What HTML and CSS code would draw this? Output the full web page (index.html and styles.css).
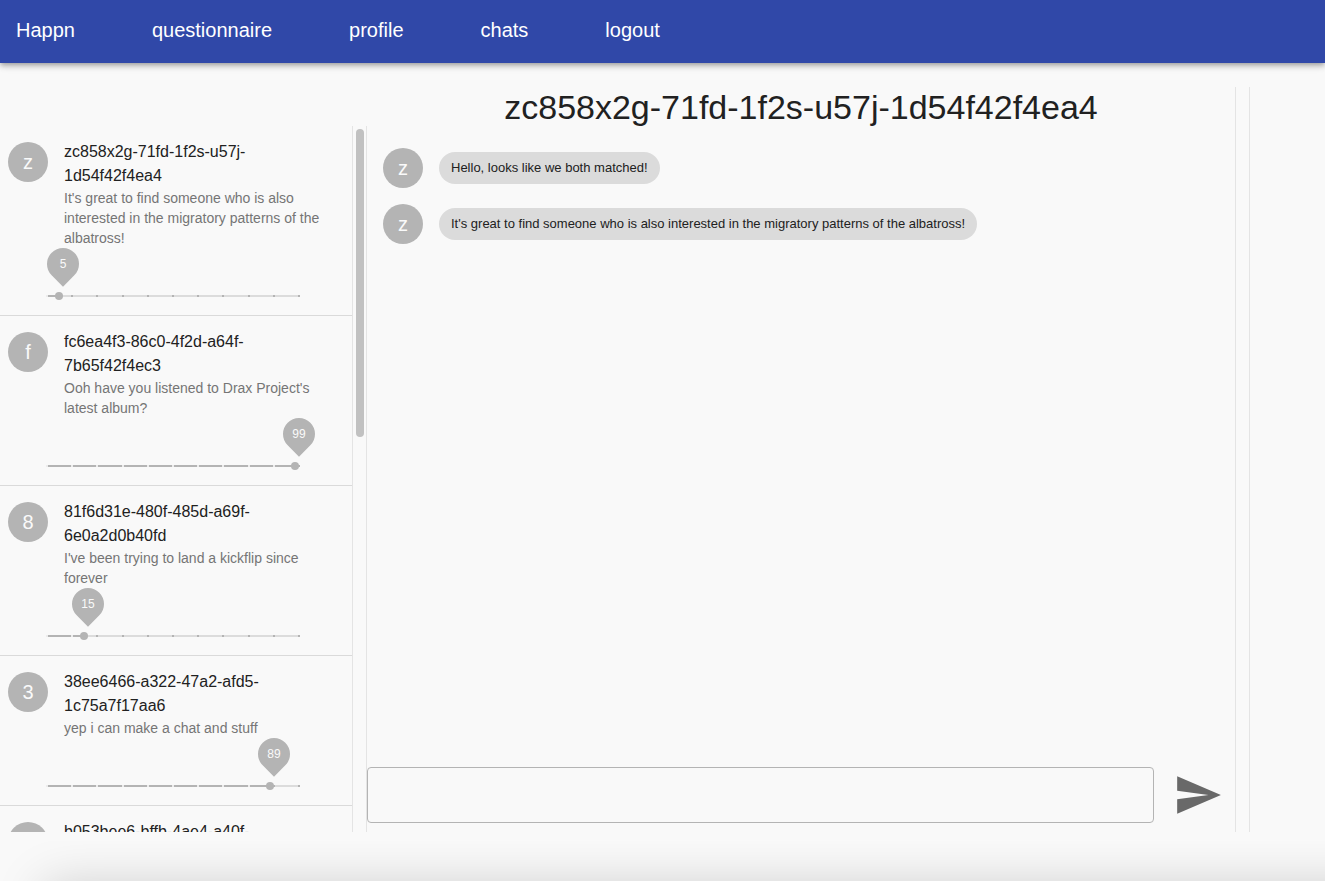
FILE: index.html
```html
<!DOCTYPE html>
<html lang="en">
<head>
<meta charset="utf-8">
<title>Happn</title>
<link rel="stylesheet" href="styles.css">
</head>
<body>
<nav class="navbar">
  <a href="#">Happn</a>
  <a href="#">questionnaire</a>
  <a href="#">profile</a>
  <a href="#">chats</a>
  <a href="#">logout</a>
</nav>
<main class="layout">
  <aside class="sidebar">
    <ul class="matches">
      <li class="match">
        <div class="match-head">
          <span class="avatar">z</span>
          <div class="match-text">
            <p class="match-name">zc858x2g-71fd-1f2s-u57j-1d54f42f4ea4</p>
            <p class="match-last">It's great to find someone who is also interested in the migratory patterns of the albatross!</p>
          </div>
        </div>
        <div class="slider" style="--value: 5%">
          <div class="slider-fill"></div>
          <input type="range" value="5" disabled aria-label="Match score">
          <output class="bubble"><span>5</span></output>
        </div>
      </li>
      <li class="match">
        <div class="match-head">
          <span class="avatar">f</span>
          <div class="match-text">
            <p class="match-name">fc6ea4f3-86c0-4f2d-a64f-7b65f42f4ec3</p>
            <p class="match-last">Ooh have you listened to Drax Project's latest album?</p>
          </div>
        </div>
        <div class="slider" style="--value: 99%">
          <div class="slider-fill"></div>
          <input type="range" value="99" disabled aria-label="Match score">
          <output class="bubble"><span>99</span></output>
        </div>
      </li>
      <li class="match">
        <div class="match-head">
          <span class="avatar">8</span>
          <div class="match-text">
            <p class="match-name">81f6d31e-480f-485d-a69f-6e0a2d0b40fd</p>
            <p class="match-last">I've been trying to land a kickflip since forever</p>
          </div>
        </div>
        <div class="slider" style="--value: 15%">
          <div class="slider-fill"></div>
          <input type="range" value="15" disabled aria-label="Match score">
          <output class="bubble"><span>15</span></output>
        </div>
      </li>
      <li class="match">
        <div class="match-head">
          <span class="avatar">3</span>
          <div class="match-text">
            <p class="match-name">38ee6466-a322-47a2-afd5-1c75a7f17aa6</p>
            <p class="match-last">yep i can make a chat and stuff</p>
          </div>
        </div>
        <div class="slider" style="--value: 89%">
          <div class="slider-fill"></div>
          <input type="range" value="89" disabled aria-label="Match score">
          <output class="bubble"><span>89</span></output>
        </div>
      </li>
      <li class="match">
        <div class="match-head">
          <span class="avatar"></span>
          <div class="match-text">
            <p class="match-name">b053bee6-bffb-4ae4-a40f-</p>
          </div>
        </div>
      </li>
    </ul>
    <div class="scrollbar"><div class="scrollbar-thumb"></div></div>
  </aside>
  <section class="chat">
    <div class="chat-body">
      <h1 class="chat-title">zc858x2g-71fd-1f2s-u57j-1d54f42f4ea4</h1>
      <ul class="messages">
        <li class="message"><span class="avatar">z</span><span class="chip">Hello, looks like we both matched!</span></li>
        <li class="message"><span class="avatar">z</span><span class="chip">It's great to find someone who is also interested in the migratory patterns of the albatross!</span></li>
      </ul>
      <form class="composer">
        <input type="text" class="composer-input" aria-label="Message">
        <button type="button" class="send" aria-label="Send">
          <svg viewBox="0 0 24 24" width="50" height="50" aria-hidden="true"><path fill="currentColor" d="M2.01 21L23 12 2.01 3 2 10l15 2-15 2z"/></svg>
        </button>
      </form>
    </div>
    <div class="scrollbar"></div>
  </section>
</main>
<div class="bottom-shade"></div>
</body>
</html>
```
FILE: styles.css
```css
* {
  box-sizing: border-box;
}

body {
  margin: 0;
  height: 100vh;
  overflow: hidden;
  position: relative;
  background: #f9f9f9;
  color: #212121;
  font-family: "Liberation Sans", Helvetica, Arial, sans-serif;
}

p, h1, ul {
  margin: 0;
  padding: 0;
}

ul {
  list-style: none;
}

.navbar {
  display: flex;
  align-items: center;
  gap: 77px;
  padding: 14px 16px 17px;
  background: #3048a8;
  box-shadow: 0 2px 4px -1px rgba(0, 0, 0, 0.2), 0 4px 5px rgba(0, 0, 0, 0.14), 0 1px 10px rgba(0, 0, 0, 0.12);
  font-size: 20px;
  line-height: 32px;
}

.navbar a {
  color: #fff;
  text-decoration: none;
}

.layout {
  display: grid;
  grid-template-columns: 367px 1fr;
  height: calc(80vh + 40px);
  margin: 24px 75px 0 0;
}

.sidebar {
  display: flex;
  min-height: 0;
  margin-top: 39px;
}

.matches {
  flex: 1;
  overflow: hidden;
}

.scrollbar {
  flex: none;
  width: 15px;
  padding: 3px;
  border: solid #e4e4e4;
  border-width: 0 1px;
}

.scrollbar-thumb {
  height: 44%;
  width: 8px;
  border-radius: 4px;
  background: #c1c1c1;
}

.match {
  border-bottom: 1px solid #dadada;
}

.match-head {
  display: flex;
  gap: 16px;
  padding: 14px 16px 14px 8px;
}

.avatar {
  flex: none;
  width: 40px;
  height: 40px;
  border-radius: 50%;
  background: #b4b4b4;
  color: #fafafa;
  font-size: 20px;
  line-height: 40px;
  text-align: center;
}

.match .avatar {
  margin-top: 2px;
}

.match-text {
  min-width: 0;
}

.match-name {
  font-size: 16px;
  line-height: 24px;
}

.match-last {
  color: #757575;
  font-size: 14px;
  line-height: 20px;
}

.slider {
  position: relative;
  height: 2px;
  margin: 33px 52px 18px 46px;
  border-right: 2px solid #b4b4b4;
  background: repeating-linear-gradient(to right, #b4b4b4 0 2px, #dcdcdc 2px 10%);
}

.slider-fill {
  height: 2px;
  background: repeating-linear-gradient(to right, #ececec 0 2px, #b4b4b4 2px 10%);
  clip-path: inset(0 calc(100% - var(--value)) 0 0);
}

.slider input {
  position: absolute;
  top: -3px;
  left: -4px;
  width: calc(100% + 8px);
  height: 8px;
  margin: 0;
  appearance: none;
  background: none;
}

.slider input::-webkit-slider-thumb {
  appearance: none;
  width: 8px;
  height: 8px;
  border-radius: 50%;
  background: #b4b4b4;
}

.bubble {
  position: absolute;
  bottom: 17px;
  left: calc(var(--value) - 12px);
  width: 32px;
  height: 32px;
  border-radius: 50% 50% 50% 0;
  background: #b4b4b4;
  color: #fafafa;
  font-size: 12px;
  line-height: 32px;
  text-align: center;
  transform: rotate(-45deg);
}

.bubble span {
  display: block;
  transform: rotate(45deg);
}

.chat {
  display: flex;
  min-width: 0;
}

.chat-body {
  flex: 1;
  display: flex;
  flex-direction: column;
}

.chat-title {
  font-size: 34px;
  font-weight: 400;
  line-height: 40px;
  text-align: center;
}

.messages {
  flex: 1;
  padding: 13px 16px;
}

.message {
  display: flex;
  align-items: center;
  gap: 16px;
  padding: 8px 0;
}

.chip {
  padding: 0 12px;
  border-radius: 16px;
  background: #dbdbdb;
  font-size: 13px;
  line-height: 32px;
}

.composer {
  display: flex;
  align-items: center;
  gap: 19px;
  padding: 0 12px 9px 0;
}

.composer-input {
  flex: 1;
  height: 56px;
  padding: 0 14px;
  border: 1px solid #b4b4b4;
  border-radius: 4px;
  background: none;
  font: inherit;
  font-size: 16px;
}

.send {
  display: flex;
  padding: 0;
  border: 0;
  background: none;
  color: #696969;
}

.bottom-shade {
  position: absolute;
  bottom: 0;
  left: 0;
  width: 100%;
  height: 40px;
  overflow: hidden;
  pointer-events: none;
}

.bottom-shade::after {
  content: "";
  position: absolute;
  top: 100%;
  left: 44px;
  right: -60px;
  height: 80px;
  box-shadow: 0 4px 50px rgba(0, 0, 0, 0.18);
}
```
